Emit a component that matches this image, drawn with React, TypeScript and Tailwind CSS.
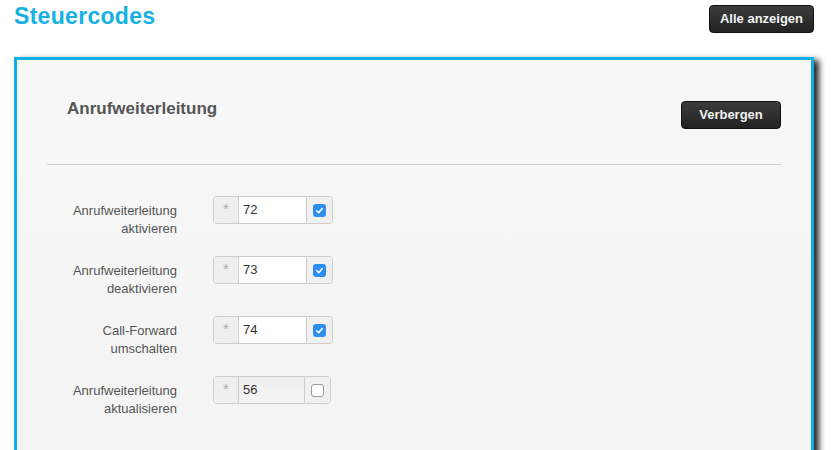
import React from "react";

const rows = [
  { l1: "Anrufweiterleitung", l2: "aktivieren", v: "72", checked: true },
  { l1: "Anrufweiterleitung", l2: "deaktivieren", v: "73", checked: true },
  { l1: "Call-Forward", l2: "umschalten", v: "74", checked: true },
  { l1: "Anrufweiterleitung", l2: "aktualisieren", v: "56", checked: false },
];

function Check({ checked }: { checked: boolean }) {
  if (checked) {
    return (
      <div className="w-[13px] h-[13px] rounded-[3px] bg-[#2d8ef2] flex items-center justify-center">
        <svg width="9" height="9" viewBox="0 0 10 10">
          <path d="M2 5.3 L4.2 7.4 L8 2.8" fill="none" stroke="#fff" strokeWidth="1.8" strokeLinecap="round" strokeLinejoin="round" />
        </svg>
      </div>
    );
  }
  return <div className="w-[13px] h-[13px] rounded-[3px] bg-white border border-[#9a9a9a]" />;
}

function Btn({ children, w }: { children: React.ReactNode; w: string }) {
  return (
    <div
      className={`${w} h-[28px] rounded-[4px] border border-[#111] bg-gradient-to-b from-[#3c3c3c] to-[#222] text-[#f2f2f2] text-[13px] font-bold flex items-center justify-center`}
    >
      {children}
    </div>
  );
}

export default function App() {
  return (
    <div
      className="w-[831px] h-[450px] overflow-hidden bg-white relative"
      style={{ fontFamily: '"Liberation Sans", Arial, sans-serif' }}
    >
      <div className="flex items-start justify-between pt-[5px] pl-[14px] pr-[17px]">
        <h1 className="text-[23px] leading-[23px] font-bold text-[#16b0e2] tracking-[0.3px]">Steuercodes</h1>
        <Btn w="w-[105px]">Alle anzeigen</Btn>
      </div>

      <div className="mt-[24px] ml-[14px] w-[800px] h-[500px] border-[3px] border-[#0cb0e2] bg-gradient-to-b from-[#f8f8f8] to-[#f2f2f2] shadow-[5px_3px_6px_rgba(0,0,0,0.85)] px-[30px] pt-[39px]">
        <div className="flex items-start justify-between pl-[20px]">
          <h2 className="text-[17px] leading-[20px] font-bold text-[#555]">Anrufweiterleitung</h2>
          <div className="mt-[2px]">
            <Btn w="w-[100px]">Verbergen</Btn>
          </div>
        </div>
        <div className="mt-[35px] h-px bg-[#cfcfcf]" />

        <div className="mt-[31px] flex flex-col">
          {rows.map((r, i) => (
            <div key={i} className="h-[60px] flex items-start">
              <div className="w-[130px] pt-[6px] text-right text-[13px] leading-[18px] text-[#555]">
                <div>{r.l1}</div>
                <div>{r.l2}</div>
              </div>
              <div className="ml-[36px] flex h-[28px] border border-[#cccccc] rounded-[4px] overflow-hidden">
                <div className="w-[25px] bg-[#efefef] border-r border-[#cccccc] flex justify-center pt-[4px] text-[15px] leading-[15px] text-[#aaa]">
                  *
                </div>
                <div
                  className={`${r.checked ? "w-[68px] bg-white" : "w-[66px] bg-gradient-to-b from-[#eeeeee] to-[#f4f4f4]"} border-r border-[#cccccc] pl-[4px] pt-[5px] text-[13px] leading-[15px] text-[#333]`}
                >
                  {r.v}
                </div>
                <div className="w-[25px] bg-[#f0f0f0] flex items-center justify-center">
                  <Check checked={r.checked} />
                </div>
              </div>
            </div>
          ))}
        </div>
      </div>
    </div>
  );
}
